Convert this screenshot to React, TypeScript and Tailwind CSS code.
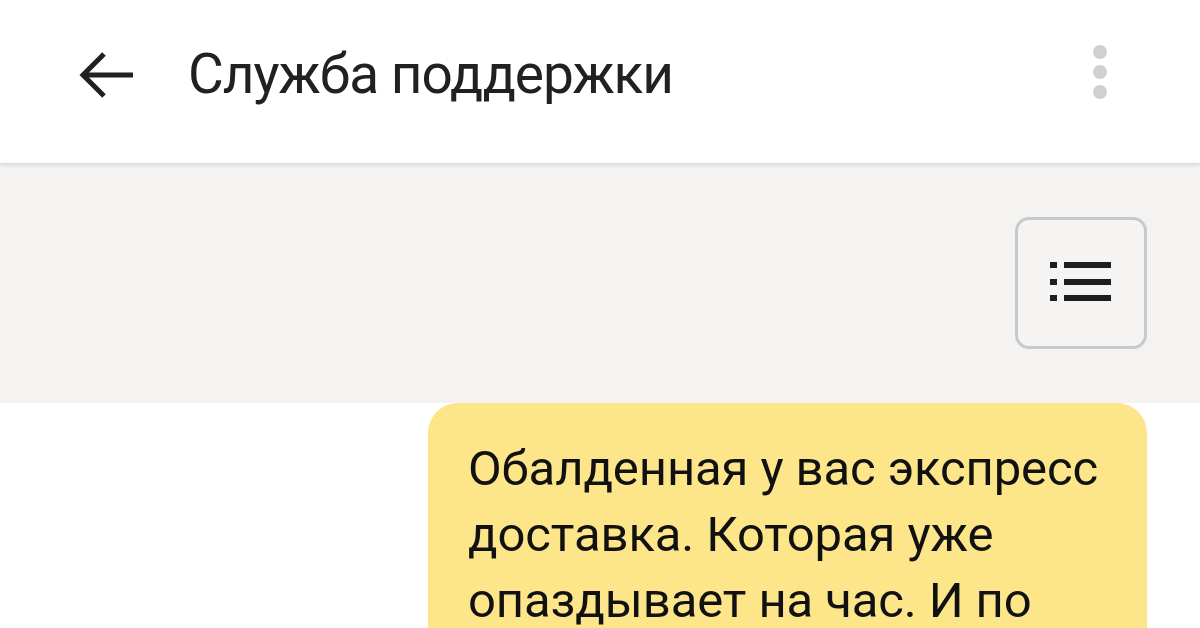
import { useState } from "react";

const BackArrow = () => (
  <svg width="56" height="50" viewBox="0 0 56 50" fill="none">
    <path
      d="M54 25H5M25 4L4 25l21 21"
      stroke="#212121"
      strokeWidth="5"
      strokeLinecap="butt"
    />
  </svg>
);

const ListIcon = () => (
  <svg width="62" height="42" viewBox="0 0 62 42">
    <rect x="0" y="0" width="7" height="6" fill="#1e1e1e" />
    <rect x="14" y="0" width="47" height="6" fill="#1e1e1e" />
    <rect x="0" y="17" width="7" height="6" fill="#1e1e1e" />
    <rect x="14" y="17" width="47" height="6" fill="#1e1e1e" />
    <rect x="0" y="33" width="7" height="6" fill="#1e1e1e" />
    <rect x="14" y="33" width="47" height="6" fill="#1e1e1e" />
  </svg>
);

const App = () => {
  const [message] = useState(
    "Обалденная у вас экспресс доставка. Которая уже опаздывает на час. И по"
  );

  return (
    <div className="flex h-[628px] w-[1200px] flex-col overflow-hidden bg-white font-['Roboto',sans-serif] text-[#212121]">
      <header className="relative z-10 flex h-[163px] shrink-0 items-center bg-white pb-[14px] pl-[79px] pr-[93px] shadow-[0_2px_4px_rgba(0,0,0,0.12)]">
        <button className="flex items-center">
          <BackArrow />
        </button>
        <h1 className="ml-[53px] text-[55px] font-normal leading-none tracking-[-1px]">
          Служба поддержки
        </h1>
        <div className="ml-auto flex flex-col items-center gap-[6px] pb-[6px]">
          <span className="h-[14px] w-[14px] rounded-full bg-[#d0d0d0]" />
          <span className="h-[14px] w-[14px] rounded-full bg-[#d0d0d0]" />
          <span className="h-[14px] w-[14px] rounded-full bg-[#d0d0d0]" />
        </div>
      </header>

      <section className="flex h-[240px] shrink-0 items-start justify-end bg-[#f4f3f1] pr-[53px] pt-[54px]">
        <button className="flex h-[132px] w-[132px] items-center justify-center rounded-[14px] border-[3px] border-[#c9c9c9] bg-[#f5f4f2]">
          <ListIcon />
        </button>
      </section>

      <main className="flex flex-1 justify-end pr-[53px]">
        <div className="w-[719px] rounded-t-[30px] bg-[#fde68a] pl-[40px] pr-[20px] pt-[33px]">
          <p className="text-[49px] leading-[66px] tracking-[-0.1px] text-[#111]">
            {message}
          </p>
        </div>
      </main>
    </div>
  );
};

export default App;
